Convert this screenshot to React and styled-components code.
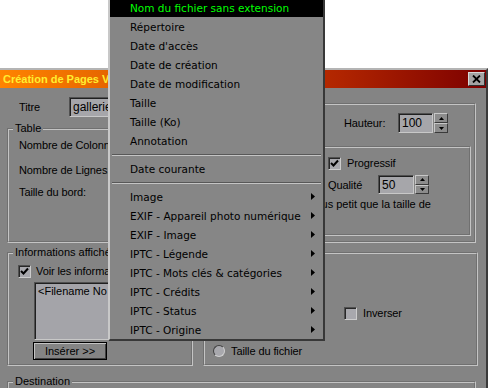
import React from 'react'
import styled, { createGlobalStyle } from 'styled-components'

const GlobalStyle = createGlobalStyle`
  html, body {
    margin: 0;
    padding: 0;
    background: #fff;
  }
  body {
    font-family: "Liberation Sans", Arial, sans-serif;
    font-size: 11px;
    color: #000;
  }
  * {
    box-sizing: border-box;
  }
`;

const Screen = styled.div`
  position: relative;
  width: 488px;
  height: 388px;
  overflow: hidden;
  background: #fff;
`;

const Backdrop = styled.div`
  height: 68px;
  background: #fff;
`;

const Window = styled.div`
  width: 488px;
  height: 330px;
  background: #848484;
  border-top: 2px solid #b4b4b4;
  border-right: 2px solid #3a3a3a;
`;

const TitleBar = styled.div`
  height: 18px;
  display: flex;
  align-items: center;
  justify-content: space-between;
  padding: 0 1px 0 3px;
  background: linear-gradient(to right, #ff8400, #b02400 70%, #7c0000);
`;

const TitleText = styled.span`
  font-weight: bold;
  font-size: 11px;
  color: #ffee30;
`;

const CloseButton = styled.div`
  width: 17px;
  height: 14px;
  display: flex;
  align-items: center;
  justify-content: center;
  background: #a4a4a4;
  border-top: 1px solid #d8d8d8;
  border-left: 1px solid #d8d8d8;
  border-right: 1px solid #303030;
  border-bottom: 1px solid #303030;
`;

const Body = styled.div`
  padding: 0 10px 0 7px;
`;

const TopRow = styled.div`
  display: flex;
  gap: 5px;
  height: 155px;
`;

const LeftCol = styled.div`
  width: 193px;
  display: flex;
  flex-direction: column;
`;

const FieldRow = styled.div`
  display: flex;
  align-items: center;
  height: ${({ $h }) => $h || 20}px;
  margin-top: ${({ $mt }) => $mt || 0}px;
  padding-left: ${({ $pl }) => $pl || 0}px;
  justify-content: ${({ $end }) => ($end ? 'flex-end' : 'flex-start')};
  margin-right: ${({ $mr }) => $mr || 0}px;
`;

const Label = styled.span`
  width: ${({ $w }) => ($w ? `${$w}px` : 'auto')};
  flex-shrink: 0;
  white-space: nowrap;
  letter-spacing: -0.1px;
`;

const TextBox = styled.div`
  width: ${({ $w }) => $w}px;
  height: ${({ $h }) => $h || 20}px;
  display: flex;
  align-items: center;
  padding: 0 3px;
  font-size: 12px;
  background: #a6a6aa;
  border-top: 1px solid #505050;
  border-left: 1px solid #505050;
  border-right: 1px solid #c8c8c8;
  border-bottom: 1px solid #c8c8c8;
  box-shadow: inset 1px 1px 0 #202020;
  white-space: nowrap;
  overflow: hidden;
`;

const Spinner = styled.div`
  width: 14px;
  height: ${({ $h }) => $h || 20}px;
  margin-left: 1px;
  display: flex;
  flex-direction: column;
`;

const SpinButton = styled.div`
  flex: 1;
  display: flex;
  align-items: center;
  justify-content: center;
  background: #8c8c8c;
  border-top: 1px solid #c8c8c8;
  border-left: 1px solid #c8c8c8;
  border-right: 1px solid #3a3a3a;
  border-bottom: 1px solid #3a3a3a;
`;

const Group = styled.fieldset`
  margin: ${({ $mt }) => $mt || 0}px 0 0 0;
  padding: 0;
  min-width: 0;
  width: ${({ $w }) => ($w ? `${$w}px` : 'auto')};
  height: ${({ $h }) => ($h ? `${$h}px` : 'auto')};
  flex: ${({ $grow }) => ($grow ? 1 : 'none')};
  border: 2px groove #c4c4c4;
`;

const Legend = styled.legend`
  margin-left: 4px;
  padding: 0 2px;
  line-height: 13px;
  font-size: 11px;
`;

const GroupBody = styled.div`
  padding: ${({ $pad }) => $pad || '0'};
  display: flex;
  flex-direction: column;
`;

const CheckBox = styled.span`
  width: 13px;
  height: 13px;
  flex-shrink: 0;
  display: inline-flex;
  align-items: center;
  justify-content: center;
  background: #a8a8ad;
  border-top: 1px solid #505050;
  border-left: 1px solid #505050;
  border-right: 1px solid #cccccc;
  border-bottom: 1px solid #cccccc;
  box-shadow: inset 1px 1px 0 #282828;
  margin-right: ${({ $mr }) => $mr || 5}px;
`;

const Radio = styled.span`
  width: 12px;
  height: 12px;
  flex-shrink: 0;
  border-radius: 50%;
  background: #a8a8ad;
  border: 1px solid;
  border-color: #404040 #d0d0d0 #d0d0d0 #404040;
  margin-right: 6px;
`;

const ListBox = styled.div`
  margin: 4px 0 0 16px;
  width: 160px;
  height: 58px;
  padding: 2px 3px;
  background: #a4a4a9;
  border-top: 1px solid #505050;
  border-left: 1px solid #505050;
  border-right: 1px solid #c8c8c8;
  border-bottom: 1px solid #c8c8c8;
  box-shadow: inset 1px 1px 0 #202020;
  white-space: nowrap;
  overflow: hidden;
`;

const PushButton = styled.div`
  margin: 2px 0 0 15px;
  width: 74px;
  height: 18px;
  display: flex;
  align-items: center;
  justify-content: center;
  background: #848484;
  border: 1px solid #000;
  box-shadow: inset 1px 1px 0 #c4c4c4, inset -1px -1px 0 #404040;
`;

const BottomRow = styled.div`
  display: flex;
  gap: 10px;
  margin-top: 3px;
`;

const SortGrid = styled.div`
  display: grid;
  grid-template-columns: 131px 1fr;
  height: 103px;
  padding: 0 0 2px 8px;
`;

const RadioList = styled.div`
  display: flex;
  flex-direction: column;
  justify-content: flex-end;
`;

const InvertCol = styled.div`
  display: flex;
  align-items: flex-start;
  padding-top: 48px;
`;

const NoteText = styled.div`
  height: 14px;
  margin-top: 3px;
  display: flex;
  justify-content: flex-end;
  padding-right: 38px;
  white-space: nowrap;
  overflow: hidden;
  line-height: 14px;
`;

const Menu = styled.div`
  position: absolute;
  left: 108px;
  top: -4px;
  width: 217px;
  background: #868686;
  border-top: 2px solid #c8c8c8;
  border-left: 2px solid #c8c8c8;
  border-right: 2px solid #383838;
  border-bottom: 2px solid #383838;
  font-family: "DejaVu Sans", Verdana, sans-serif;
  font-size: 10.5px;
  z-index: 10;
`;

const MenuItem = styled.div`
  height: 19px;
  display: flex;
  align-items: center;
  justify-content: space-between;
  padding: 0 8px 0 20px;
  background: ${({ $active }) => ($active ? '#000' : 'transparent')};
  color: ${({ $active }) => ($active ? '#00ff00' : '#000')};
  white-space: nowrap;
`;

const Separator = styled.div`
  height: 9px;
  display: flex;
  flex-direction: column;
  justify-content: center;
  padding: 0 2px;

  &::before {
    content: '';
    display: block;
    height: 1px;
    background: #585858;
  }
  &::after {
    content: '';
    display: block;
    height: 1px;
    background: #c4c4c4;
  }
`;

const menuItems = [
  { label: 'Nom du fichier sans extension', active: true },
  { label: 'Répertoire' },
  { label: "Date d'accès" },
  { label: 'Date de création' },
  { label: 'Date de modification' },
  { label: 'Taille' },
  { label: 'Taille (Ko)' },
  { label: 'Annotation' },
  { sep: true },
  { label: 'Date courante' },
  { sep: true },
  { label: 'Image', sub: true },
  { label: 'EXIF - Appareil photo numérique', sub: true },
  { label: 'EXIF - Image', sub: true },
  { label: 'IPTC - Légende', sub: true },
  { label: 'IPTC - Mots clés & catégories', sub: true },
  { label: 'IPTC - Crédits', sub: true },
  { label: 'IPTC - Status', sub: true },
  { label: 'IPTC - Origine', sub: true },
];

const Check = () => (
  <svg width="9" height="9" viewBox="0 0 9 9">
    <path d="M1 4 L3.5 6.5 L8 1.5" fill="none" stroke="#000" strokeWidth="2" />
  </svg>
);

const Arrow = () => (
  <svg width="4" height="7" viewBox="0 0 4 7">
    <polygon points="0,0 4,3.5 0,7" fill="#000" />
  </svg>
);

const UpDown = ({ h }) => (
  <Spinner $h={h}>
    <SpinButton>
      <svg width="5" height="3" viewBox="0 0 5 3"><polygon points="2.5,0 5,3 0,3" fill="#000" /></svg>
    </SpinButton>
    <SpinButton>
      <svg width="5" height="3" viewBox="0 0 5 3"><polygon points="0,0 5,0 2.5,3" fill="#000" /></svg>
    </SpinButton>
  </Spinner>
);

const ContextMenu = () => (
  <Menu>
    {menuItems.map((item, index) =>
      item.sep ? (
        <Separator key={index} />
      ) : (
        <MenuItem key={index} $active={item.active}>
          <span>{item.label}</span>
          {item.sub && <Arrow />}
        </MenuItem>
      )
    )}
  </Menu>
);

export default function App() {
  return (
    <Screen>
      <GlobalStyle />
      <Backdrop />
      <Window>
        <TitleBar>
          <TitleText>Création de Pages Vignettes</TitleText>
          <CloseButton>
            <svg width="9" height="8" viewBox="0 0 9 8">
              <path d="M1 0.5 L8 7.5 M8 0.5 L1 7.5" stroke="#000" strokeWidth="1.8" />
            </svg>
          </CloseButton>
        </TitleBar>
        <Body>
          <TopRow>
            <LeftCol>
              <FieldRow $mt={9} $pl={12}>
                <Label $w={50}>Titre</Label>
                <TextBox $w={120}>gallerie</TextBox>
              </FieldRow>
              <Group $mt={5} $grow>
                <Legend>Table</Legend>
                <GroupBody $pad="0 0 0 10px">
                  <FieldRow $mt={0}><Label>Nombre de Colonnes:</Label></FieldRow>
                  <FieldRow $mt={5}><Label>Nombre de Lignes:</Label></FieldRow>
                  <FieldRow $mt={2}><Label>Taille du bord:</Label></FieldRow>
                </GroupBody>
              </Group>
            </LeftCol>
            <Group $mt={15} $w={273} $h={140}>
              <GroupBody $pad="0 3px 0 8px">
                <FieldRow $mt={8} $end $mr={23}>
                  <Label $w={54}>Hauteur:</Label>
                  <TextBox $w={35}>100</TextBox>
                  <UpDown />
                </FieldRow>
                <Group $mt={13} $h={90}>
                  <GroupBody $pad="0 0 0 113px">
                    <FieldRow $mt={8} $h={14}>
                      <CheckBox $mr={6}><Check /></CheckBox>
                      <Label>Progressif</Label>
                    </FieldRow>
                    <FieldRow $mt={5} $h={19}>
                      <Label $w={50}>Qualité</Label>
                      <TextBox $w={36} $h={19}>50</TextBox>
                      <UpDown h={19} />
                    </FieldRow>
                  </GroupBody>
                  <NoteText>Ne pas agrandir si plus petit que la taille de</NoteText>
                </Group>
              </GroupBody>
            </Group>
          </TopRow>
          <BottomRow>
            <Group $w={186} $h={120}>
              <Legend>Informations affichées</Legend>
              <GroupBody $pad="5px 0 0 9px">
                <FieldRow $h={14}>
                  <CheckBox><Check /></CheckBox>
                  <Label>Voir les informations</Label>
                </FieldRow>
                <ListBox>&lt;Filename No Ext&gt;</ListBox>
                <PushButton>Insérer &gt;&gt;</PushButton>
              </GroupBody>
            </Group>
            <Group $w={275} $h={120}>
              <Legend>Trier par</Legend>
              <SortGrid>
                <RadioList>
                  <FieldRow $h={19}><Radio /><Label>Taille du fichier</Label></FieldRow>
                </RadioList>
                <InvertCol>
                  <CheckBox $mr={6} />
                  <Label>Inverser</Label>
                </InvertCol>
              </SortGrid>
            </Group>
          </BottomRow>
          <Group $mt={9} $h={60}>
            <Legend>Destination</Legend>
          </Group>
        </Body>
      </Window>
      <ContextMenu />
    </Screen>
  );
}
